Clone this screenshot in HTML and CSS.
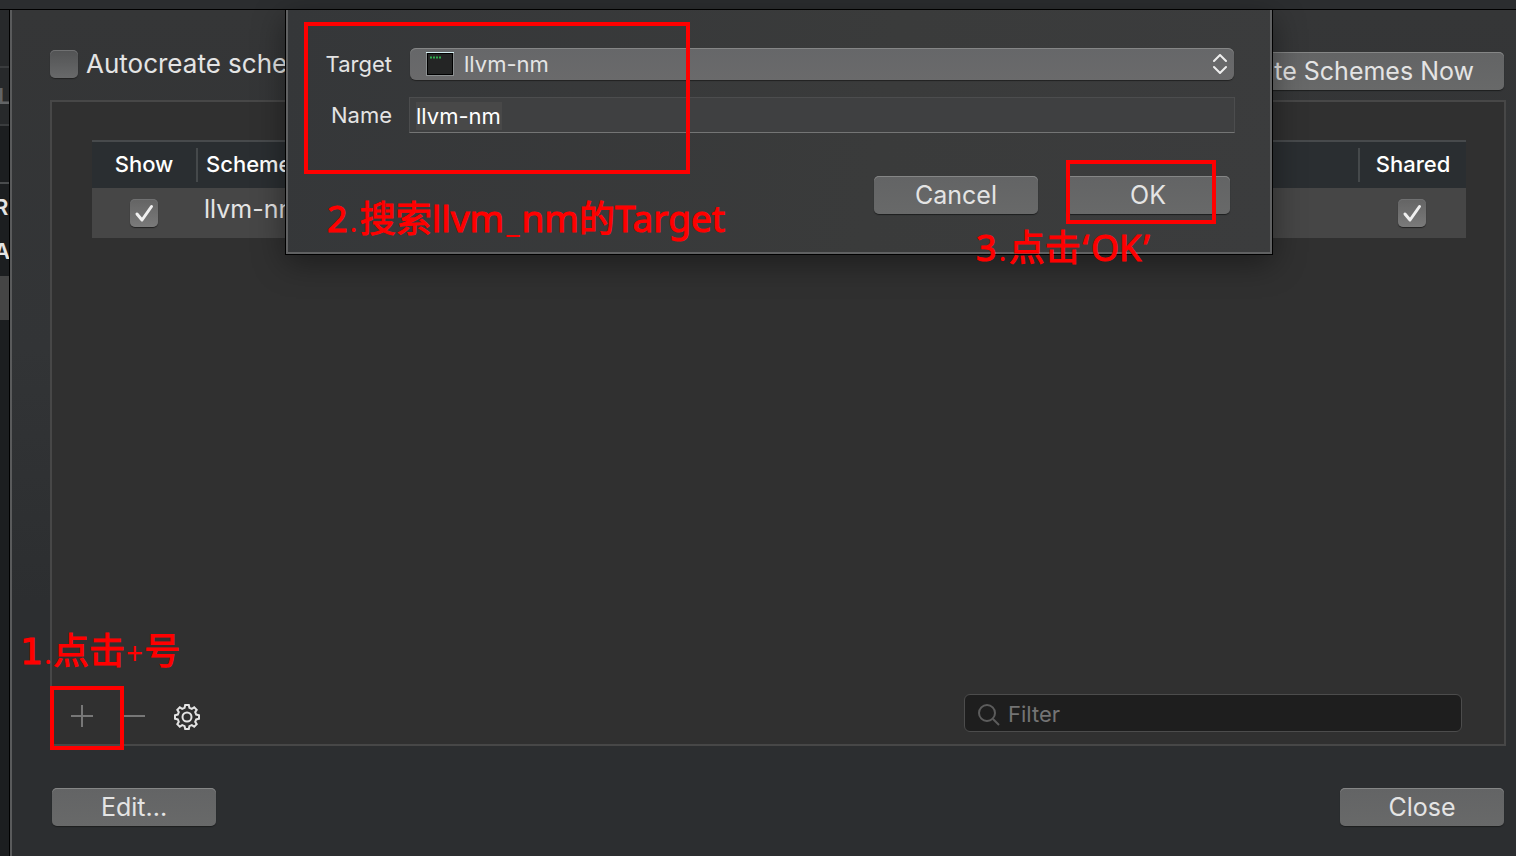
FILE: index.html
```
<!DOCTYPE html>
<html lang="zh">
<head>
  <meta charset="utf-8">
  <title>Manage Schemes</title>
  <link rel="stylesheet" href="styles.css">
</head>
<body>
  <div class="titlebar"></div>

  <div class="workspace">
    <div class="sidebar">
      <div class="side-tabs"></div>
      <div class="side-tool">L</div>
      <div class="side-header"></div>
      <div class="side-item">R</div>
      <div class="side-item">A</div>
      <div class="side-item selected"></div>
    </div>

    <main class="manager">
      <div class="top-row">
        <label class="autocreate"><input type="checkbox" class="check"> Autocreate schemes</label>
        <button class="btn wide">Autocreate Schemes Now</button>
      </div>

      <section class="panel">
        <table class="schemes">
          <thead>
            <tr>
              <th class="col-show"><div>Show</div></th>
              <th class="col-name"><div>Scheme</div></th>
              <th class="col-shared"><div>Shared</div></th>
            </tr>
          </thead>
          <tbody>
            <tr>
              <td>
                <span class="tick">
                  <input type="checkbox" class="check" aria-label="Show" checked>
                  <svg viewBox="0 0 28 28"><path d="M7 15l5 6L21.500 7.500"/></svg>
                </span>
              </td>
              <td class="name">llvm-nm</td>
              <td>
                <span class="tick">
                  <input type="checkbox" class="check" aria-label="Shared" checked>
                  <svg viewBox="0 0 28 28"><path d="M7 15l5 6L21.500 7.500"/></svg>
                </span>
              </td>
            </tr>
          </tbody>
        </table>

        <div class="panel-footer">
          <button class="tool add" aria-label="Add">
            <svg width="22" height="22" viewBox="0 0 22 22"><path d="M11 0v22M0 11h22"/></svg>
          </button>
          <button class="tool remove" aria-label="Remove">
            <svg width="22" height="22" viewBox="0 0 22 22"><path d="M0 11h22"/></svg>
          </button>
          <button class="tool gear" aria-label="Options">
            <svg width="28" height="28" viewBox="0 0 28 28">
              <path d="M11.600 4.800L12.200 2h3.600l.6 2.800 2.400 1 2.400-1.500 2.500 2.500-1.500 2.400 1 2.400 2.800.6v3.600l-2.800.6-1 2.400 1.500 2.400-2.500 2.500-2.400-1.500-2.400 1-.6 2.800h-3.600l-.6-2.800-2.400-1-2.400 1.500-2.500-2.500 1.500-2.400-1-2.400L2 15.800v-3.600l2.800-.6 1-2.400-1.500-2.400 2.500-2.500 2.400 1.500z"/>
              <circle cx="14" cy="14" r="4.500"/>
            </svg>
          </button>

          <label class="filter">
            <svg width="24" height="24" viewBox="0 0 24 24"><circle cx="10" cy="11" r="8"/><path d="M16 17l6 6"/></svg>
            <input type="text" placeholder="Filter" aria-label="Filter">
          </label>
        </div>

        <div class="mark mark-add"></div>
        <div class="note note-add"><b>1</b><i>.</i>点击<i>+</i>号</div>
      </section>

      <div class="bottom-row">
        <button class="btn">Edit...</button>
        <button class="btn">Close</button>
      </div>

      <!-- New scheme sheet -->
      <form class="sheet">
        <div class="fields">
          <label for="target">Target</label>
          <div class="target">
            <svg class="target-icon" width="28" height="24" viewBox="0 0 28 24">
              <rect x="0" y="0" width="28" height="24" fill="#8b8f90"/>
              <rect x="0" y="0" width="28" height="1" fill="#d4eef2"/>
              <rect x="1" y="1" width="26" height="22" fill="#000"/>
              <rect x="2" y="2" width="24" height="20" fill="#242525"/>
              <path d="M4 5.500h11" stroke="#2fae4e" stroke-width="2" stroke-dasharray="2 1"/>
            </svg>
            <select id="target"><option>llvm-nm</option></select>
            <svg class="arrows" width="14" height="20" viewBox="0 0 14 20"><path d="M1 7l6-6 6 6M1 13l6 6 6-6"/></svg>
          </div>
          <label for="name">Name</label>
          <input id="name" type="text" value="llvm-nm">
        </div>
        <div class="actions">
          <button type="button" class="btn">Cancel</button>
          <button type="button" class="btn">OK</button>
        </div>

        <div class="mark mark-target"></div>
        <div class="note note-target">2<i>.</i>搜索<span>llvm</span><i>_</i><span>nm</span>的<span>Target</span></div>
        <div class="mark mark-ok"></div>
        <div class="note note-ok">3<i>.</i>点击<q>OK</q></div>
      </form>
    </main>
  </div>
</body>
</html>
```
FILE: styles.css
```
* { box-sizing: border-box; }

body {
  margin: 0;
  min-height: 100vh;
  display: flex;
  flex-direction: column;
  font-family: Inter, "Noto Sans CJK SC", sans-serif;
  font-size: 25px;
  color: #e4e4e4;
  background: #2c2e30;
}

button, input, select {
  font: inherit;
  color: inherit;
  margin: 0;
}

svg {
  fill: none;
  stroke: currentColor;
}

.titlebar {
  height: 10px;
  background: #2b2d2f;
  border-bottom: 1px solid #000;
}

.workspace {
  flex: 1;
  display: flex;
}

/* Strip of the window behind */
.sidebar {
  width: 10px;
  flex: none;
  overflow: hidden;
  background: #1c1e20;
  border-right: 1px solid #000;
  font-size: 22px;
  font-weight: 600;
}

.side-tabs {
  height: 58px;
  background: #27292b;
  border-bottom: 2px solid #3a3c3e;
}

.side-tool {
  height: 58px;
  line-height: 56px;
  background: #27292b;
  border-bottom: 2px solid #3a3c3e;
  color: #626466;
  text-indent: -2px;
}

.side-header {
  height: 58px;
  border-bottom: 2px solid #4a4c4e;
}

.side-item {
  height: 44px;
  line-height: 46px;
  text-indent: -6px;
}

.side-item.selected {
  height: 44px;
  margin-top: 4px;
  background: #454545;
}

/* Scheme manager */
.manager {
  position: relative;
  flex: 1;
  min-width: 0;
  display: flex;
  flex-direction: column;
  padding: 40px 10px 30px 38px;
  border-left: 2px solid #5a5b5c;
  background: linear-gradient(#353637, #323436 40%, #2c2e30 70%);
}

.top-row {
  display: flex;
  justify-content: space-between;
  align-items: flex-start;
  height: 50px;
  padding-right: 2px;
}

.autocreate {
  display: flex;
  align-items: center;
  gap: 8px;
  font-size: 26px;
  line-height: 28px;
}

.check {
  appearance: none;
  width: 28px;
  height: 28px;
  border-radius: 5px;
  background: linear-gradient(#525354, #68696a);
  box-shadow: inset 0 1px #707172, 0 1px 1px #222;
}

.check:checked {
  background: linear-gradient(#646464, #7a7a7a);
}

.btn {
  min-width: 164px;
  height: 38px;
  padding: 0 30px;
  border: 0;
  border-radius: 5px;
  line-height: 38px;
  background: linear-gradient(#636465, #686969);
  box-shadow: inset 0 1px #858686, 0 1px 1px #1d1e1f;
}

.top-row .btn {
  margin-top: 2px;
}

.panel {
  position: relative;
  flex: 1;
  display: flex;
  flex-direction: column;
  justify-content: space-between;
  padding: 38px 38px 12px 40px;
  border: 2px solid #474747;
  background: #303030;
}

.schemes {
  width: 100%;
  table-layout: fixed;
  border-collapse: collapse;
  border-top: 2px solid #474a4c;
}

.schemes th {
  height: 47px;
  padding: 0;
  background: #2a2e31;
  color: #fff;
  font-size: 22px;
  font-weight: 500;
}

.schemes th div {
  height: 34px;
  line-height: 32px;
  border-right: 2px solid #45494b;
}

.schemes .col-show { width: 106px; }

.schemes .col-name div {
  padding-left: 8px;
  text-align: left;
}

.schemes .col-shared { width: 106px; }
.schemes .col-shared div { border: 0; }

.schemes td {
  height: 50px;
  padding: 0 2px 4px 0;
  background: #464646;
  text-align: center;
}

.schemes .name {
  padding: 0 0 8px 6px;
  text-align: left;
}

.tick {
  display: inline-grid;
  vertical-align: middle;
}

.tick > * { grid-area: 1 / 1; }

.tick svg {
  width: 28px;
  height: 28px;
  stroke: #f0f0f0;
  stroke-width: 3;
  stroke-linecap: round;
  stroke-linejoin: round;
  pointer-events: none;
}

.panel-footer {
  display: flex;
  align-items: center;
  padding-right: 4px;
}

.tool {
  display: flex;
  padding: 0;
  border: 0;
  background: none;
  color: #777;
  stroke-width: 2;
}

.add { margin: 6px 0 0 -21px; }
.remove { margin: 6px 0 0 30px; }

.gear {
  margin: 8px 0 0 28px;
  color: #e4e4e4;
}

.filter {
  display: flex;
  align-items: center;
  gap: 7px;
  width: 498px;
  height: 38px;
  margin-left: auto;
  padding: 2px 12px 0;
  border: 1px solid #4c4c4c;
  border-radius: 6px;
  background: #1e1e1e;
  color: #5c5c5c;
  font-size: 22px;
  stroke-width: 2;
}

.filter input {
  flex: 1;
  min-width: 0;
  padding: 0;
  border: 0;
  outline: 0;
  background: none;
  color: #ddd;
}

.filter input::placeholder { color: #747474; }

.bottom-row {
  display: flex;
  justify-content: space-between;
  padding: 42px 2px 0;
}

/* Sheet */
.sheet {
  position: absolute;
  top: 0;
  left: 273px;
  right: 243px;
  height: 245px;
  padding: 38px 37px 0 36px;
  border: 1px solid #000;
  border-top: 0;
  background: linear-gradient(100deg, #353739, #3a3b3b 60%, #3b3c3d);
  box-shadow: inset 2px 0 #606162, inset -2px -2px #606162, 0 8px 30px rgba(0, 0, 0, 0.4);
}

.fields {
  display: grid;
  grid-template-columns: 70px 1fr;
  column-gap: 17px;
  row-gap: 17px;
  align-items: center;
  font-size: 22px;
}

.fields label { text-align: right; }

.target {
  position: relative;
  height: 32px;
  margin: 0 1px;
}

.target select {
  appearance: none;
  width: 100%;
  height: 32px;
  padding: 0 54px;
  border: 0;
  border-radius: 6px;
  background: linear-gradient(#666769, #6a6a6b);
  box-shadow: inset 0 1px #858686, 0 1px 1px #222;
}

.target-icon {
  position: absolute;
  top: 4px;
  left: 16px;
  stroke: none;
}

.arrows {
  position: absolute;
  top: 6px;
  right: 7px;
  stroke: #eee;
  stroke-width: 2;
  stroke-linecap: round;
  stroke-linejoin: round;
  pointer-events: none;
}

.fields > input {
  width: 100%;
  height: 36px;
  padding: 2px 6px 0;
  border: 1px solid #4c4d4e;
  border-bottom: 1px solid #747575;
  outline: 0;
  color: #fff;
  background: linear-gradient(#484848, #484848) 6px 4px / 86px 28px no-repeat #3f4041;
}

.actions {
  display: flex;
  justify-content: flex-end;
  gap: 28px;
  padding: 43px 5px 0 0;
}

/* Red step marks */
.mark {
  position: absolute;
  border: 4px solid #f00;
  pointer-events: none;
}

.mark-add {
  left: -2px;
  bottom: -6px;
  width: 74px;
  height: 64px;
}

.mark-target {
  top: 12px;
  left: 18px;
  width: 386px;
  height: 152px;
}

.mark-ok {
  top: 150px;
  right: 56px;
  width: 150px;
  height: 64px;
}

.note {
  position: absolute;
  color: #f00;
  font-family: "Noto Sans", "Noto Sans CJK SC", sans-serif;
  font-size: 36px;
  line-height: 48px;
  white-space: nowrap;
  pointer-events: none;
  -webkit-text-stroke: 1px #f00;
}

.note b {
  font-family: "DejaVu Sans", sans-serif;
  font-weight: 400;
}

.note span { font-size: 37px; }

.note i {
  padding: 0 2px;
  font-size: 30px;
  font-style: normal;
  -webkit-text-stroke: 0;
}

.note-add i { padding: 0 1px; }

.note q {
  quotes: "‘" "’";
}

.note q::before,
.note q::after {
  padding: 0 2px;
}

.note-add {
  left: -32px;
  bottom: 67px;
}

.note-target {
  top: 184px;
  left: 41px;
}

.note-ok {
  top: 214px;
  left: 690px;
}
```
